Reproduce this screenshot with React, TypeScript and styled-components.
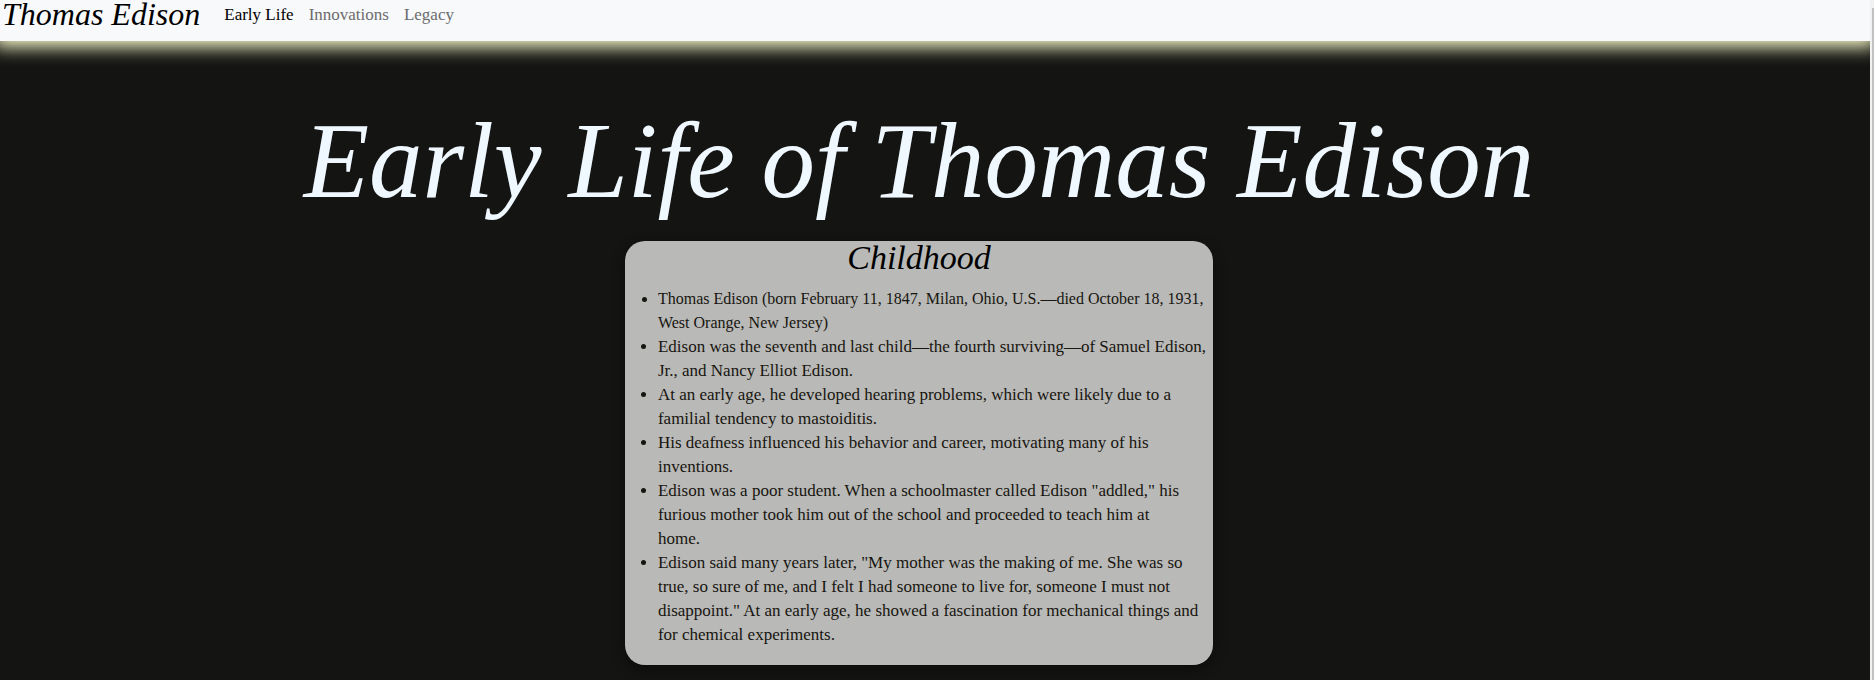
import React from 'react';
import styled, { createGlobalStyle } from 'styled-components';

const GlobalStyle = createGlobalStyle`
  * { box-sizing: border-box; }
  html, body { margin: 0; }
  body {
    background: #141412;
    font-family: "Liberation Serif", serif;
    overflow: hidden;
  }
`;

const Shell = styled.div`
  display: flex;
  height: 100vh;
`;

const Page = styled.div`
  flex: 1;
  min-width: 0;
  overflow: hidden;
`;

const ScrollTrack = styled.div`
  width: 4px;
  padding: 8px 0 0 2px;
  background: #f1f1f1;
`;

const ScrollThumb = styled.div`
  height: 100%;
  background: #c1c1c1;
`;

const NavBar = styled.nav`
  display: flex;
  align-items: flex-start;
  gap: 24px;
  height: 41px;
  padding-left: 2px;
  background: #f8f9fb;
  box-shadow: 0 0 18px 6px #ffffd0;
`;

const Brand = styled.a`
  color: #000;
  font-size: 32px;
  font-style: italic;
  line-height: 28px;
  text-decoration: none;
`;

const NavLinks = styled.div`
  display: flex;
  gap: 15px;
`;

const NavLink = styled.a<{ $active?: boolean }>`
  color: ${(p) => (p.$active ? '#000' : '#6b6c6d')};
  font-size: 17px;
  line-height: 30px;
  text-decoration: none;
`;

const Main = styled.main`
  display: flex;
  flex-direction: column;
  align-items: center;
  padding: 56px 32px 0 0;
`;

const Title = styled.h1`
  margin: 0;
  color: #f0f8ff;
  font-size: 107px;
  font-style: italic;
  font-weight: 400;
  line-height: 128px;
  white-space: nowrap;
`;

const Card = styled.section`
  width: 32%;
  min-width: 587px;
  margin-top: 16px;
  padding-bottom: 18px;
  overflow: hidden;
  background: #b9b9b7;
  border-radius: 20px;
  box-shadow: 0 4px 12px #0c0c0a;
`;

const CardTitle = styled.h2`
  margin: 0 0 12px;
  color: #000;
  font-size: 34px;
  font-style: italic;
  font-weight: 400;
  line-height: 34px;
  text-align: center;
`;

const FactList = styled.ul`
  margin: 0;
  padding-left: 33px;
  color: #17150f;
`;

const Fact = styled.li<{ $compact?: boolean }>`
  font-size: ${(p) => (p.$compact ? 16 : 17)}px;
  line-height: 24px;
  white-space: pre;
`;

const facts = [
  'Thomas Edison (born February 11, 1847, Milan, Ohio, U.S.—died October 18, 1931,\nWest Orange, New Jersey)',
  'Edison was the seventh and last child—the fourth surviving—of Samuel Edison,\nJr., and Nancy Elliot Edison.',
  'At an early age, he developed hearing problems, which were likely due to a\nfamilial tendency to mastoiditis.',
  'His deafness influenced his behavior and career, motivating many of his\ninventions.',
  'Edison was a poor student. When a schoolmaster called Edison "addled," his\nfurious mother took him out of the school and proceeded to teach him at\nhome.',
  'Edison said many years later, "My mother was the making of me. She was so\ntrue, so sure of me, and I felt I had someone to live for, someone I must not\ndisappoint." At an early age, he showed a fascination for mechanical things and\nfor chemical experiments.',
];

export default function App() {
  return (
    <>
      <GlobalStyle />
      <Shell>
        <Page>
          <NavBar>
            <Brand href="#">Thomas Edison</Brand>
            <NavLinks>
              <NavLink href="#early-life" $active>Early Life</NavLink>
              <NavLink href="#innovations">Innovations</NavLink>
              <NavLink href="#legacy">Legacy</NavLink>
            </NavLinks>
          </NavBar>
          <Main>
            <Title>Early Life of Thomas Edison</Title>
            <Card>
              <CardTitle>Childhood</CardTitle>
              <FactList>
                {facts.map((fact, i) => (
                  <Fact key={fact} $compact={i === 0}>{fact}</Fact>
                ))}
              </FactList>
            </Card>
          </Main>
        </Page>
        <ScrollTrack>
          <ScrollThumb />
        </ScrollTrack>
      </Shell>
    </>
  );
}
